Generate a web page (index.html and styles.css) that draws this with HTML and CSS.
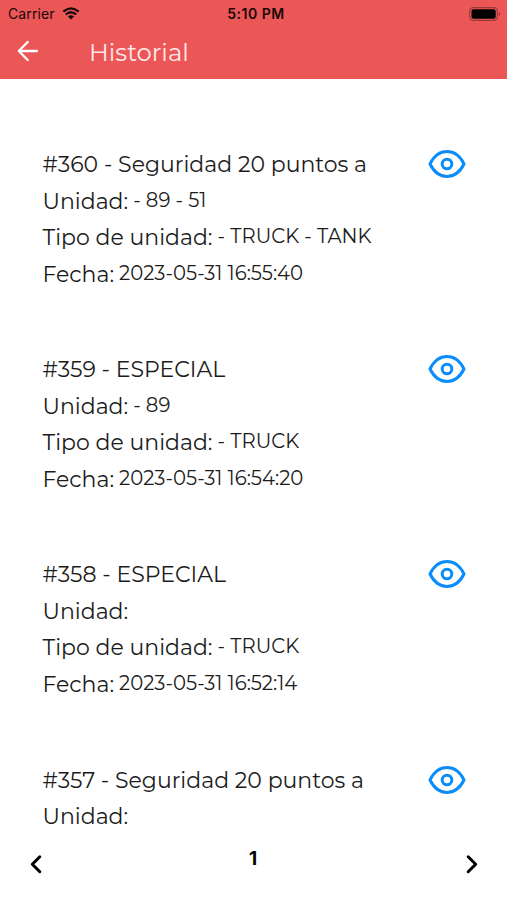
FILE: index.html
```html
<!DOCTYPE html>
<html lang="es">
<head>
<meta charset="utf-8">
<title>Historial</title>
<link rel="stylesheet" href="styles.css">
</head>
<body>
<svg class="defs" aria-hidden="true">
  <symbol id="eye" viewBox="0 0 38 30">
    <path d="M2 15C6 7 12 2.600 19 2.600S32 7 36 15C32 23 26 27.400 19 27.400S6 23 2 15Z"/>
    <circle cx="19" cy="15" r="4.800"/>
  </symbol>
</svg>
<header class="header">
  <div class="status">
    <div class="carrier">
      <span>Carrier</span>
      <svg class="wifi" viewBox="0 0 18 13">
        <path d="M1.300 4.700Q9-2 16.700 4.700M3.800 7.500Q9 3 14.200 7.500"/>
        <path class="dot" d="M5.900 9.500Q9 6.800 12.100 9.500L9 12.600Z"/>
      </svg>
    </div>
    <span class="time">5:10 PM</span>
    <svg class="battery" viewBox="0 0 32 14">
      <rect class="shell" x=".8" y=".6" width="27.600" height="12.800" rx="3.600"/>
      <rect x="2.500" y="2.300" width="24.200" height="9.400" rx="2"/>
      <path class="cap" d="M29.800 5v4q1.500-.6 1.500-2t-1.500-2Z"/>
    </svg>
  </div>
  <div class="bar">
    <svg class="back" viewBox="0 0 22 22"><path d="M10.700 2 1.800 11l8.900 9M2 11h18"/></svg>
    <h1 class="heading">Historial</h1>
  </div>
</header>
<main class="list">
  <article class="item">
    <div class="details">
      <h2 class="title">#360 - Seguridad 20 puntos a</h2>
      <p class="row"><span class="label">Unidad:</span><span class="value">- 89 - 51</span></p>
      <p class="row"><span class="label">Tipo de unidad:</span><span class="value">- TRUCK - TANK</span></p>
      <p class="row"><span class="label">Fecha:</span><span class="value">2023-05-31 16:55:40</span></p>
    </div>
    <svg class="eye"><use href="#eye"/></svg>
  </article>
  <article class="item">
    <div class="details">
      <h2 class="title">#359 - ESPECIAL</h2>
      <p class="row"><span class="label">Unidad:</span><span class="value">- 89</span></p>
      <p class="row"><span class="label">Tipo de unidad:</span><span class="value">- TRUCK</span></p>
      <p class="row"><span class="label">Fecha:</span><span class="value">2023-05-31 16:54:20</span></p>
    </div>
    <svg class="eye"><use href="#eye"/></svg>
  </article>
  <article class="item">
    <div class="details">
      <h2 class="title">#358 - ESPECIAL</h2>
      <p class="row"><span class="label">Unidad:</span></p>
      <p class="row"><span class="label">Tipo de unidad:</span><span class="value">- TRUCK</span></p>
      <p class="row"><span class="label">Fecha:</span><span class="value">2023-05-31 16:52:14</span></p>
    </div>
    <svg class="eye"><use href="#eye"/></svg>
  </article>
  <article class="item">
    <div class="details">
      <h2 class="title">#357 - Seguridad 20 puntos a</h2>
      <p class="row"><span class="label">Unidad:</span></p>
    </div>
    <svg class="eye"><use href="#eye"/></svg>
  </article>
</main>
<footer class="pager">
  <svg class="chevron" viewBox="0 0 14 20"><path d="M10.800 2.800 3.300 10.200l7.500 7.500"/></svg>
  <span class="page">1</span>
  <svg class="chevron" viewBox="0 0 14 20"><path d="m3.200 2.800 7.500 7.400-7.500 7.500"/></svg>
</footer>
</body>
</html>
```
FILE: styles.css
```css
* {
  box-sizing: border-box;
}

body {
  margin: 0;
  height: 900px;
  display: flex;
  flex-direction: column;
  overflow: hidden;
  background: #fff;
  color: #1c1c1c;
  font-family: Montserrat, Inter, sans-serif;
}

h1, h2, p {
  margin: 0;
  font-weight: 400;
}

svg {
  display: block;
  fill: none;
  stroke-linecap: round;
  stroke-linejoin: round;
}

.defs {
  display: none;
}

.header {
  flex: none;
  height: 79px;
  background: #eb5757;
}

.status {
  display: grid;
  grid-template-columns: 1fr auto 1fr;
  align-items: center;
  height: 27px;
  padding: 0 6px 0 8px;
  color: #190808;
  font-family: Inter, sans-serif;
  font-size: 14px;
}

.carrier {
  display: flex;
  align-items: center;
  gap: 7px;
  letter-spacing: .1px;
}

.wifi {
  width: 18px;
  height: 13px;
  stroke: #190808;
  stroke-width: 2.2;
  stroke-linecap: butt;
}

.wifi .dot {
  fill: #190808;
  stroke: none;
}

.time {
  padding-left: 3px;
  font-weight: 600;
  letter-spacing: .5px;
}

.battery {
  justify-self: end;
  width: 32px;
  height: 14px;
  fill: #000;
}

.battery .shell {
  fill: none;
  stroke: #9b3939;
  stroke-width: 1.2;
}

.battery .cap {
  fill: #9b3939;
}

.bar {
  display: flex;
  align-items: center;
  height: 48px;
  padding-left: 17px;
}

.back {
  width: 22px;
  height: 22px;
  stroke: #fff;
  stroke-width: 2.3;
}

.heading {
  margin: 1px 0 0 50px;
  color: #ffe9e9;
  font-size: 24.300px;
  line-height: 30px;
}

.list {
  flex: none;
  height: 755px;
  padding: 67px 42px 0 42.500px;
  overflow: hidden;
}

.item {
  display: flex;
  justify-content: space-between;
  margin-bottom: 58.200px;
}

.details {
  padding-top: 1px;
}

.title,
.label {
  font-size: 22px;
  line-height: 36.500px;
  white-space: nowrap;
}

.row {
  display: flex;
  gap: 5px;
  height: 36.500px;
}

.value {
  font-size: 19.650px;
  line-height: 32.500px;
  white-space: nowrap;
}

.eye {
  flex: none;
  width: 38px;
  height: 30px;
  margin: 3px -.5px 0 0;
  stroke: #0a8dfa;
  stroke-width: 3;
}

.pager {
  display: flex;
  justify-content: space-between;
  padding: 20px 28px 0 29px;
}

.chevron {
  width: 14px;
  height: 20px;
  stroke: #000;
  stroke-width: 3;
}

.page {
  height: 20px;
  margin: -5px 2px 0 0;
  color: #000;
  font-family: Inter, sans-serif;
  font-size: 19px;
  font-weight: 700;
  line-height: 20px;
}
```
